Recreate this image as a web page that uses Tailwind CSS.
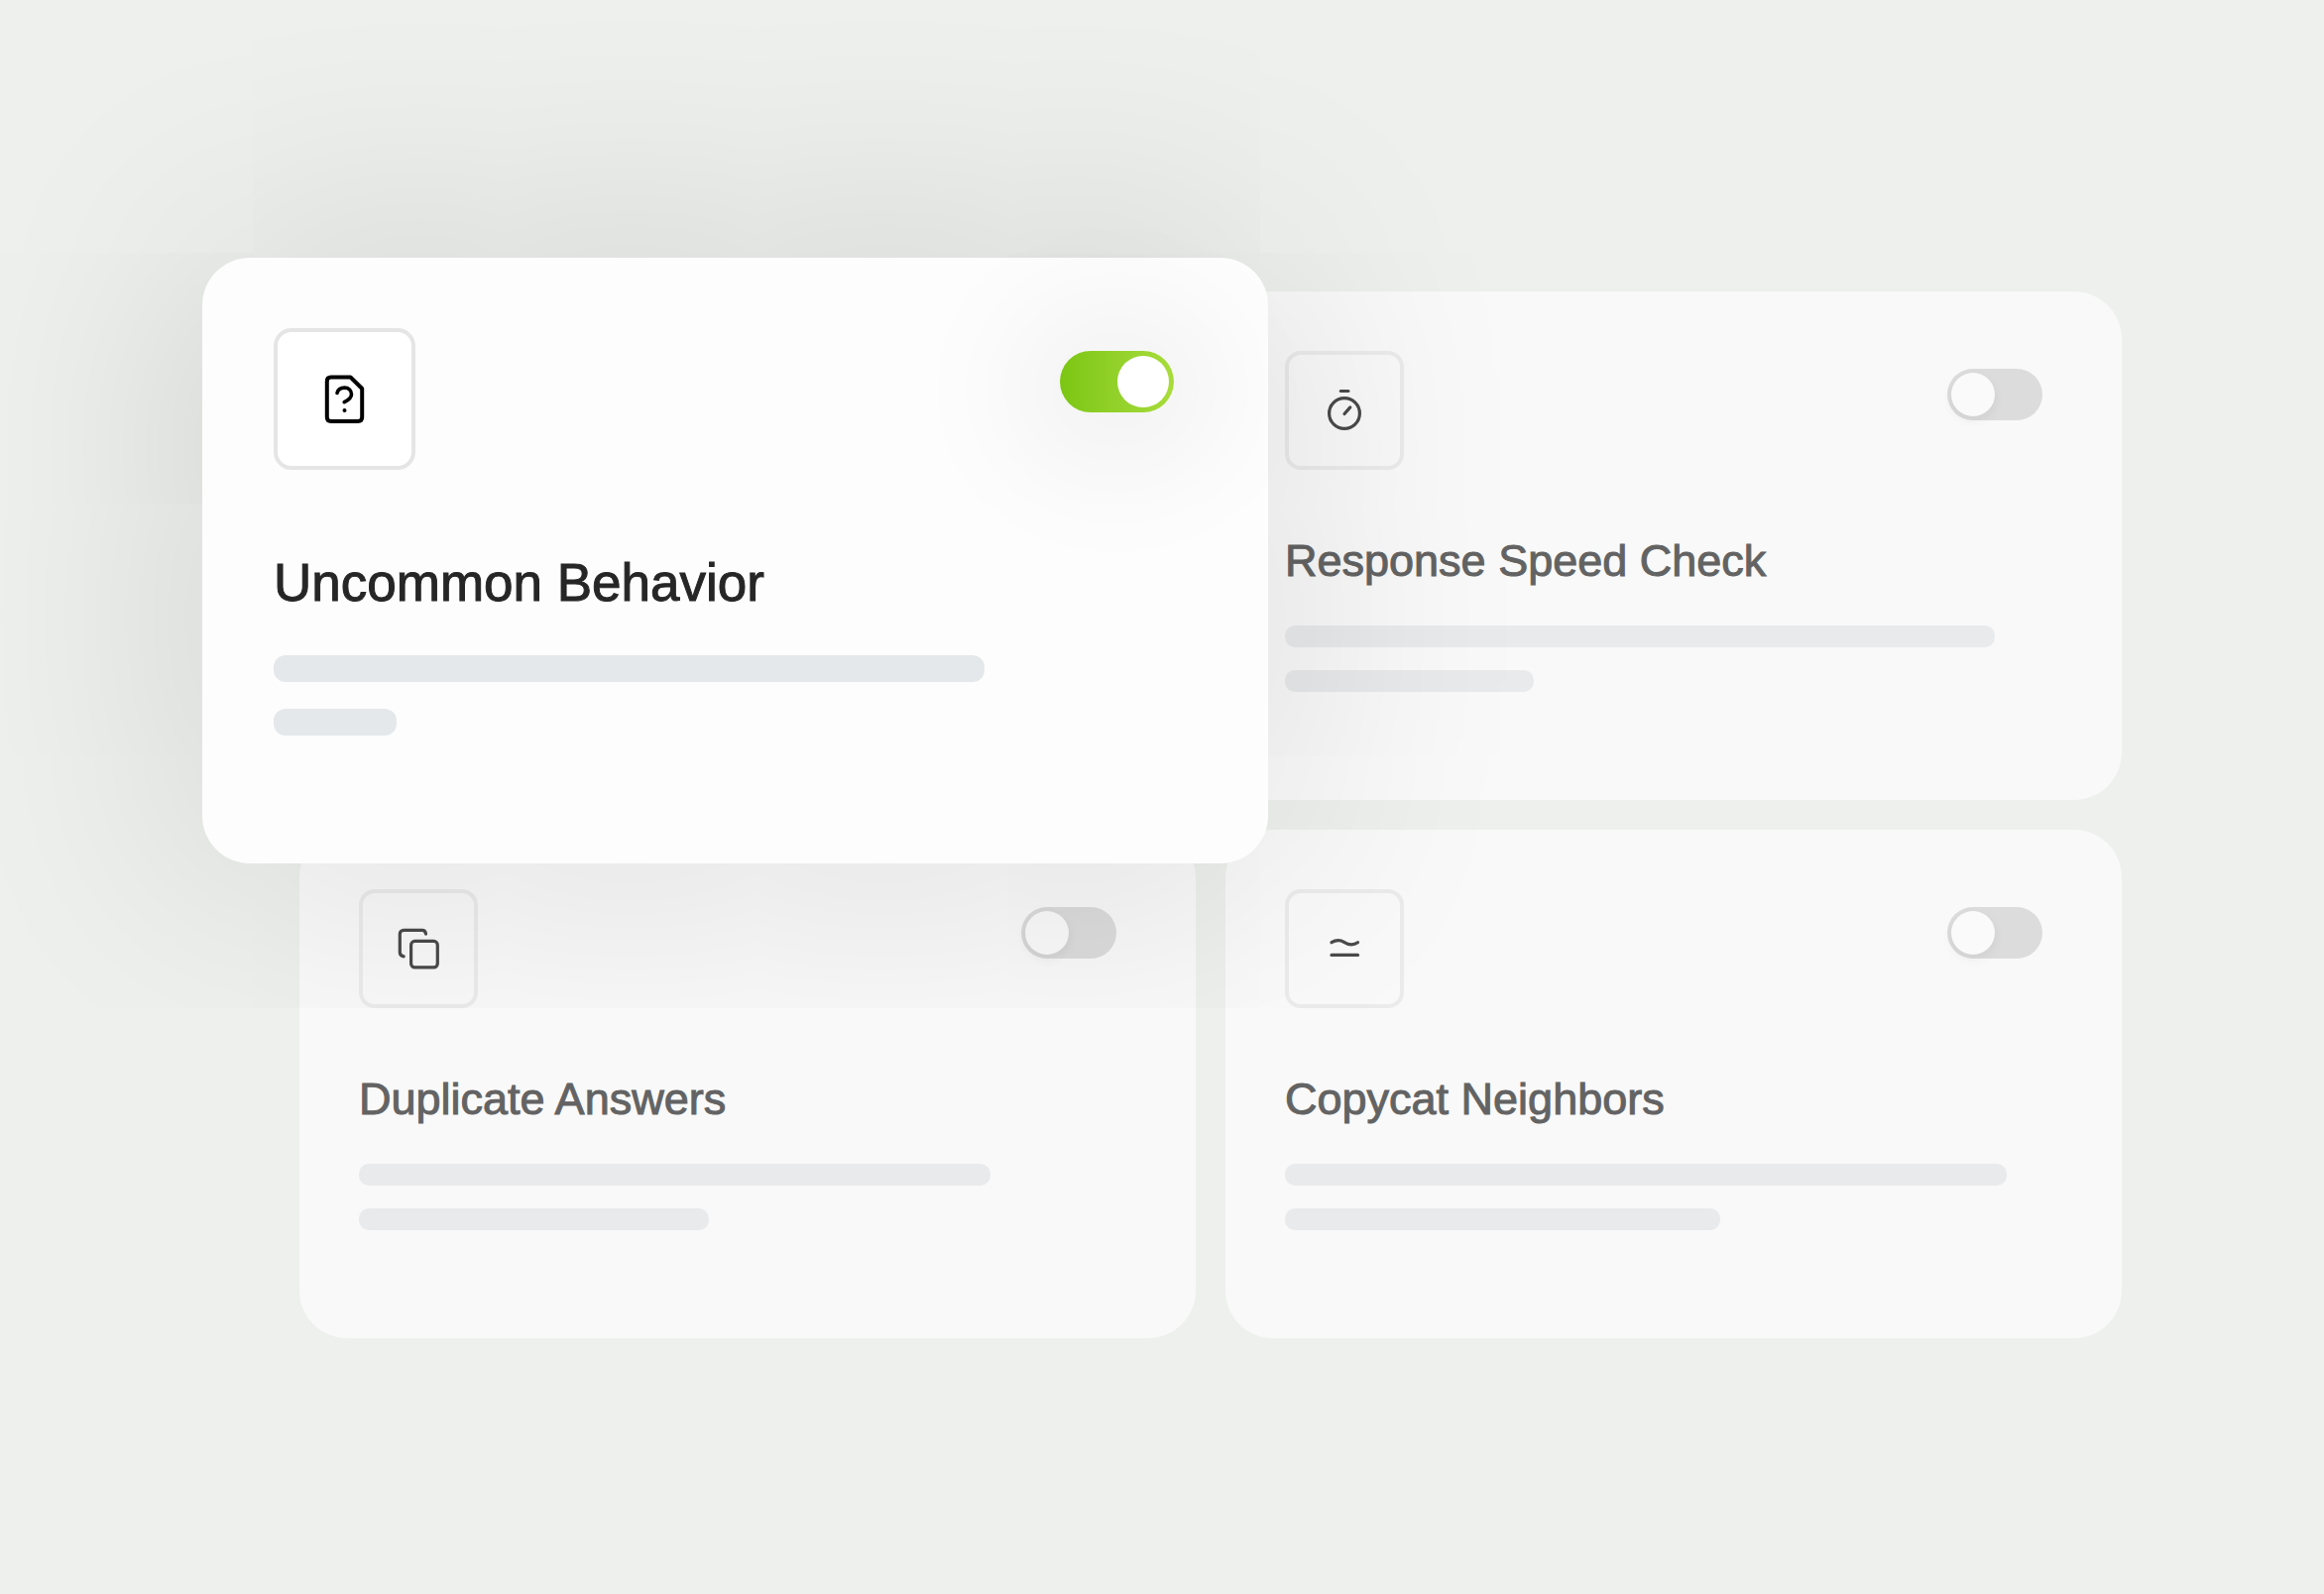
<!DOCTYPE html>
<html lang="en">
<head>
<meta charset="utf-8">
<meta name="viewport" content="width=device-width, initial-scale=1">
<title>Response quality checks</title>
<script src="https://cdn.jsdelivr.net/npm/@tailwindcss/browser@4"></script>
</head>
<body class="min-h-screen bg-[#edf0ec] font-['Liberation_Sans',Arial,sans-serif]">
<main class="relative px-[204px] py-[260px]">
  <div class="relative">
    <section class="ml-[98px] grid grid-cols-2 gap-[30px] pt-[34px]">
      <div class="min-h-[513px]"></div>

      <article class="min-h-[513px] rounded-[48px] bg-[#f9f9f9] p-[60px]">
        <div class="flex items-start justify-between">
          <div class="flex size-[120px] items-center justify-center rounded-2xl border-4 border-[#ebebeb] text-[#4a4a4a]">
            <svg class="size-[50px]" viewBox="0 0 50 50" fill="none" stroke="currentColor" stroke-width="3.2" stroke-linecap="round" stroke-linejoin="round" aria-hidden="true"><path d="M21.3 5.5h7.6"/><circle cx="25" cy="28" r="15.4"/><path d="M25 28.5l5.8-6.6"/></svg>
          </div>
          <input type="checkbox" role="switch" aria-labelledby="speed" class="mt-[18px] mr-5 h-[52px] w-24 appearance-none rounded-full bg-[#dcdcdc] p-1 before:block before:size-11 before:rounded-full before:bg-[#fafafa] before:shadow-[0_4px_12px_rgba(0,0,0,0.06)] checked:bg-[#8fd122] checked:before:ml-auto">
        </div>
        <h2 id="speed" class="mt-16 text-[45px] leading-[56px] text-[#636363] [-webkit-text-stroke:1px_#636363]">Response Speed Check</h2>
        <div class="mt-[37px] flex flex-col gap-[23px]">
          <div class="h-[22px] w-[716px] max-w-full rounded-[10px] bg-[#e8eaec]"></div>
          <div class="h-[22px] w-[251px] max-w-full rounded-[10px] bg-[#e8eaec]"></div>
        </div>
      </article>

      <article class="min-h-[513px] rounded-[48px] bg-[#f9f9f9] p-[60px]">
        <div class="flex items-start justify-between">
          <div class="flex size-[120px] items-center justify-center rounded-2xl border-4 border-[#ebebeb] text-[#4a4a4a]">
            <svg class="size-[50px]" viewBox="0 0 50 50" fill="none" stroke="currentColor" stroke-width="3.2" stroke-linecap="round" stroke-linejoin="round" aria-hidden="true"><rect x="17.6" y="17.4" width="26.7" height="26.5" rx="3.8"/><path d="M10.2 32.8c-2.3-.4-3.9-1.8-3.9-4V10.2c0-2.3 1.6-3.9 3.9-3.9h18.4c2.2 0 3.7 1.5 3.900 3.9"/></svg>
          </div>
          <input type="checkbox" role="switch" aria-labelledby="duplicate" class="mt-[18px] mr-5 h-[52px] w-24 appearance-none rounded-full bg-[#dcdcdc] p-1 before:block before:size-11 before:rounded-full before:bg-[#fafafa] before:shadow-[0_4px_12px_rgba(0,0,0,0.06)] checked:bg-[#8fd122] checked:before:ml-auto">
        </div>
        <h2 id="duplicate" class="mt-16 text-[45px] leading-[56px] text-[#636363] [-webkit-text-stroke:1px_#636363]">Duplicate Answers</h2>
        <div class="mt-[37px] flex flex-col gap-[23px]">
          <div class="h-[22px] w-[637px] max-w-full rounded-[10px] bg-[#e8eaec]"></div>
          <div class="h-[22px] w-[353px] max-w-full rounded-[10px] bg-[#e8eaec]"></div>
        </div>
      </article>

      <article class="min-h-[513px] rounded-[48px] bg-[#f9f9f9] p-[60px]">
        <div class="flex items-start justify-between">
          <div class="flex size-[120px] items-center justify-center rounded-2xl border-4 border-[#ebebeb] text-[#4a4a4a]">
            <svg class="size-[50px]" viewBox="0 0 50 50" fill="none" stroke="currentColor" stroke-width="3.2" stroke-linecap="round" stroke-linejoin="round" aria-hidden="true"><path d="M12 18.7c4.5-2.7 8.7-2.8 12.5-.4s8.8 4 14 .4"/><path d="M12 31.4h26.5"/></svg>
          </div>
          <input type="checkbox" role="switch" aria-labelledby="copycat" class="mt-[18px] mr-5 h-[52px] w-24 appearance-none rounded-full bg-[#dcdcdc] p-1 before:block before:size-11 before:rounded-full before:bg-[#fafafa] before:shadow-[0_4px_12px_rgba(0,0,0,0.06)] checked:bg-[#8fd122] checked:before:ml-auto">
        </div>
        <h2 id="copycat" class="mt-16 text-[45px] leading-[56px] text-[#636363] [-webkit-text-stroke:1px_#636363]">Copycat Neighbors</h2>
        <div class="mt-[37px] flex flex-col gap-[23px]">
          <div class="h-[22px] w-[728px] max-w-full rounded-[10px] bg-[#e8eaec]"></div>
          <div class="h-[22px] w-[439px] max-w-full rounded-[10px] bg-[#e8eaec]"></div>
        </div>
      </article>
    </section>

    <!-- Active check, raised over the grid -->
    <article class="absolute top-0 left-0 min-h-[611px] w-[calc(50%+107px)] rounded-[48px] bg-[#fdfdfd] px-[72px] pt-[71px] shadow-[0_0_270px_rgba(0,10,6,0.16)]">
      <div class="flex items-start justify-between">
        <div class="flex size-[143px] items-center justify-center rounded-[18px] border-4 border-[#e5e5e5] bg-white text-black">
          <svg class="size-[60px]" viewBox="0 0 60 60" fill="none" stroke="currentColor" stroke-width="4" stroke-linecap="round" stroke-linejoin="round" aria-hidden="true"><path d="M15.8 7.500H35.500L47.200 19v28.700c0 2.600-1.600 4.200-4.200 4.200H15.800c-2.500 0-4-1.600-4-4.200v-36c0-2.600 1.500-4.200 4-4.200z"/><path stroke-width="3.6" d="M22 23.500c.8-3.400 3.800-5.400 7.500-5.400 4.200 0 7 3 7 6.600 0 4.600-4.500 6.500-7.300 7.900"/><circle cx="29.500" cy="41" r="2" fill="currentColor" stroke="none"/></svg>
        </div>
        <input type="checkbox" role="switch" checked aria-labelledby="uncommon" class="mt-[23px] mr-[23px] h-[62px] w-[115px] appearance-none rounded-full bg-linear-to-r from-[#7cc613] to-[#a8dc3a] p-[5px] shadow-[0_8px_130px_50px_rgba(0,0,0,0.05)] before:ml-auto before:block before:size-[52px] before:rounded-full before:bg-white">
      </div>
      <h2 id="uncommon" class="mt-[82px] text-[53px] leading-[64px] text-[#262626] [-webkit-text-stroke:1px_#262626]">Uncommon Behavior</h2>
      <div class="mt-[41px] flex flex-col gap-[27px]">
        <div class="h-[27px] w-[717px] max-w-full rounded-xl bg-[#e4e8ea]"></div>
        <div class="h-[27px] w-[124px] max-w-full rounded-xl bg-[#e4e8ea]"></div>
      </div>
    </article>
  </div>
</main>
</body>
</html>
